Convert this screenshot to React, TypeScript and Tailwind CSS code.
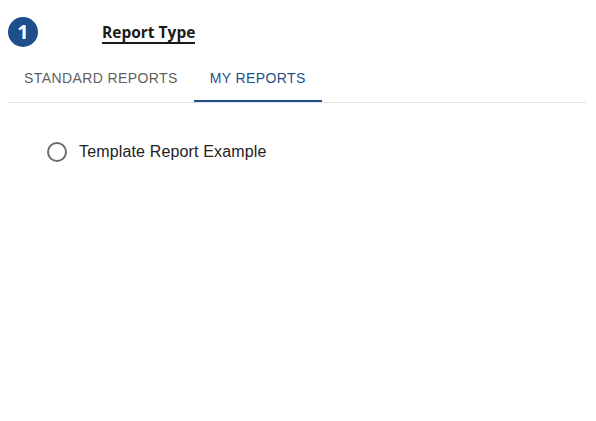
import React from "react";

export default function App() {
  return (
    <div className="w-[596px] h-[421px] bg-white pl-2 pr-[10px]">
      <div className="flex items-start h-[54px] pt-[17px]">
        <div className="w-[30px] h-[30px] rounded-full bg-[#1f4e8c] flex items-center justify-center text-white text-[20px] font-bold font-['Open_Sans',sans-serif] leading-none">
          1
        </div>
        <div className="ml-[64px] mt-[5px] text-[15.5px] font-bold text-[#1a1a1a] font-['Open_Sans',sans-serif] border-b-2 border-[#1a1a1a] leading-[20px]">
          Report Type
        </div>
      </div>
      <div className="flex border-b border-[#e0e0e0] font-['Liberation_Sans',Arial,sans-serif] text-[14px] tracking-[0.4px]">
        <div className="h-[48px] px-4 flex items-center text-[#5f5f5f]">STANDARD REPORTS</div>
        <div className="h-[48px] px-4 flex items-center text-[#1f4e8c] border-b-2 border-[#1f4e8c] pt-[2px]">MY REPORTS</div>
      </div>
      <div className="pl-[39px] pt-[39px] flex items-center font-['Liberation_Sans',Arial,sans-serif] leading-[20px]">
        <div className="w-[20px] h-[20px] rounded-full border-2 border-[#6b6b6b]" />
        <div className="ml-[12px] text-[16px] tracking-[0.15px] text-[#222]">Template Report Example</div>
      </div>
    </div>
  );
}
